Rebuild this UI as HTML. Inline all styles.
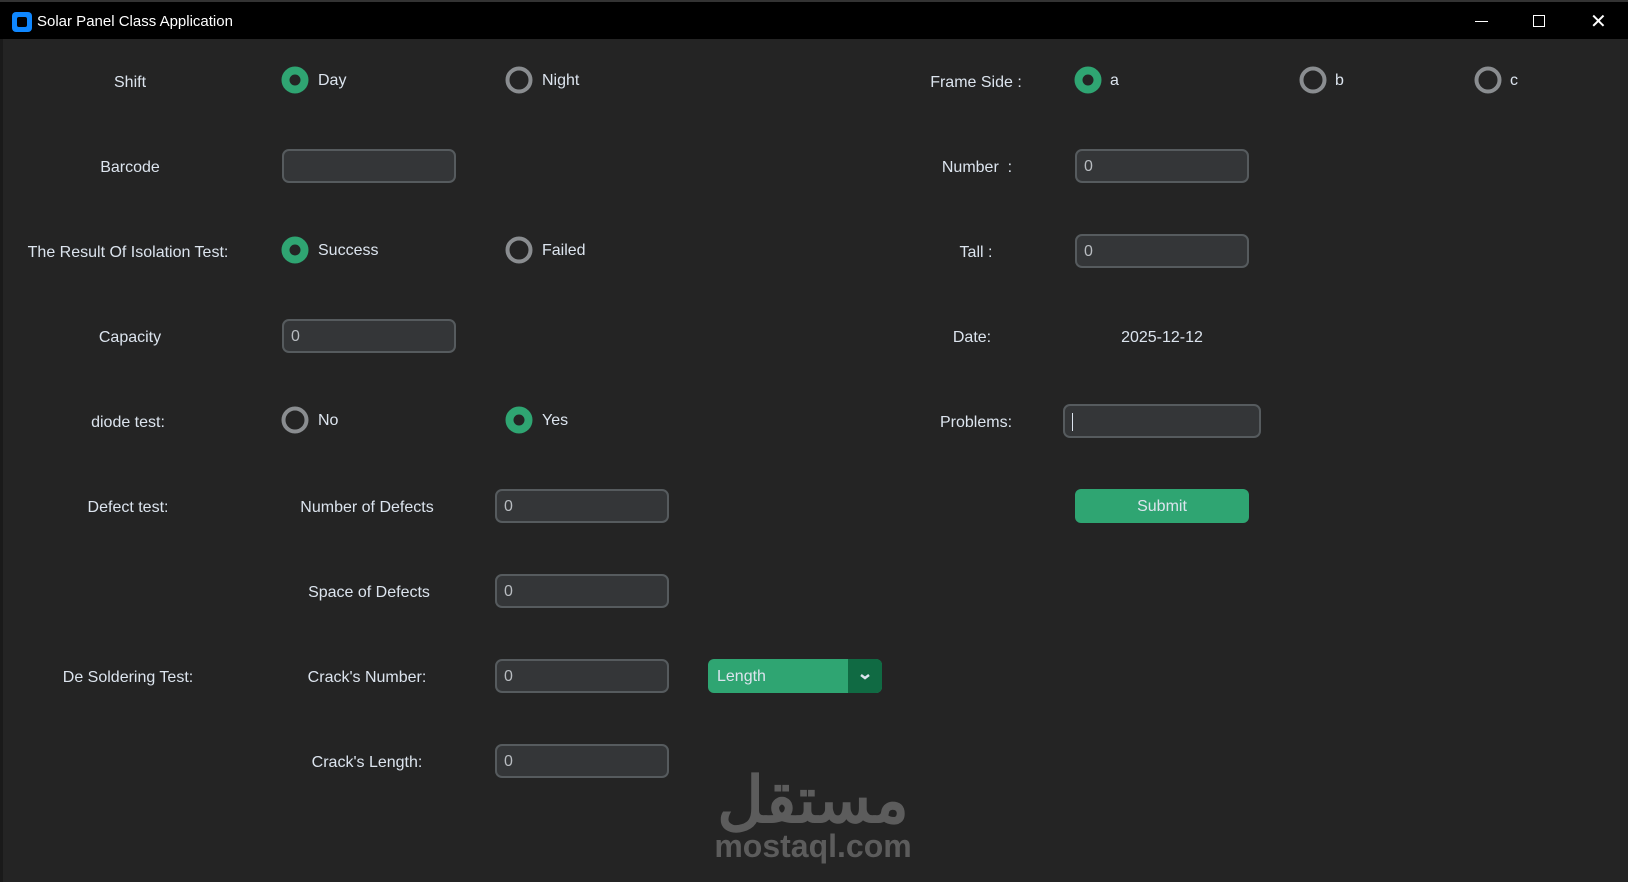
<!DOCTYPE html>
<html><head><meta charset="utf-8"><style>
*{margin:0;padding:0;box-sizing:border-box}
body{width:1628px;height:882px;background:#242424;font-family:"Liberation Sans",sans-serif;color:#dce4ee;font-size:16px;position:relative;overflow:hidden}
.tb{position:absolute;left:0;top:0;width:1628px;height:39px;background:#000;border-top:2px solid #333}
.tb .t{position:absolute;left:37px;top:11px;font-size:15px;color:#fff}
.ic{position:absolute;left:12px;top:10px;width:20px;height:20px;background:#0f87ff;border-radius:4px}
.ic:after{content:"";position:absolute;left:5px;top:5px;width:10px;height:10px;background:#000;border-radius:2px}
.l{position:absolute;transform:translate(-50%,-50%);white-space:nowrap;margin-top:2px}
.r{position:absolute;width:27px;height:27px;border-radius:50%;transform:translate(-50%,-50%)}
.on{border:8px solid #2fa572;background:#242424}
.off{border:4px solid #8a8d90}
.rl{position:absolute;transform:translateY(-50%);margin-top:1px}
.e{position:absolute;width:174px;height:34px;background:#343638;border:2px solid #565b5e;border-radius:7px;color:#b8bcc0;padding:7px 0 0 7px}
</style></head><body>
<div class="tb"><div class="ic"></div><div class="t">Solar Panel Class Application</div>
<div style="position:absolute;left:1475px;top:19px;width:13px;height:1px;background:#fff"></div>
<div style="position:absolute;left:1533px;top:13px;width:12px;height:12px;border:1px solid #fff"></div>
<div style="position:absolute;left:1590px;top:10px;color:#fff;font-size:20px;line-height:20px">✕</div>
</div>
<div style="position:absolute;left:0;top:39px;width:3px;height:843px;background:#1a1a1a"></div>

<div class="l" style="left:130px;top:81px">Shift</div>
<div class="r on" style="left:295px;top:80px"></div><div class="rl" style="left:318px;top:80px">Day</div>
<div class="r off" style="left:519px;top:80px"></div><div class="rl" style="left:542px;top:80px">Night</div>

<div class="l" style="left:130px;top:166px">Barcode</div>
<div class="e" style="left:282px;top:149px"></div>

<div class="l" style="left:128px;top:251px">The Result Of Isolation Test:</div>
<div class="r on" style="left:295px;top:250px"></div><div class="rl" style="left:318px;top:250px">Success</div>
<div class="r off" style="left:519px;top:250px"></div><div class="rl" style="left:542px;top:250px">Failed</div>

<div class="l" style="left:130px;top:336px">Capacity</div>
<div class="e" style="left:282px;top:319px">0</div>

<div class="l" style="left:128px;top:421px">diode test:</div>
<div class="r off" style="left:295px;top:420px"></div><div class="rl" style="left:318px;top:420px">No</div>
<div class="r on" style="left:519px;top:420px"></div><div class="rl" style="left:542px;top:420px">Yes</div>

<div class="l" style="left:128px;top:506px">Defect test:</div>
<div class="l" style="left:367px;top:506px">Number of Defects</div>
<div class="e" style="left:495px;top:489px">0</div>

<div class="l" style="left:369px;top:591px">Space of Defects</div>
<div class="e" style="left:495px;top:574px">0</div>

<div class="l" style="left:128px;top:676px">De Soldering Test:</div>
<div class="l" style="left:367px;top:676px">Crack's Number:</div>
<div class="e" style="left:495px;top:659px">0</div>
<div style="position:absolute;left:708px;top:659px;width:174px;height:34px;background:#2fa572;border-radius:6px;overflow:hidden">
<div style="position:absolute;left:9px;top:9px">Length</div>
<div style="position:absolute;right:0;top:0;width:34px;height:34px;background:#106a43"><svg width="34" height="34"><path d="M13 16l4 3 4-3" stroke="#dce4ee" stroke-width="2.5" fill="none"/></svg></div>
</div>

<div class="l" style="left:367px;top:761px">Crack's Length:</div>
<div class="e" style="left:495px;top:744px">0</div>

<div class="l" style="left:976px;top:81px">Frame Side :</div>
<div class="r on" style="left:1088px;top:80px"></div><div class="rl" style="left:1110px;top:80px">a</div>
<div class="r off" style="left:1313px;top:80px"></div><div class="rl" style="left:1335px;top:80px">b</div>
<div class="r off" style="left:1488px;top:80px"></div><div class="rl" style="left:1510px;top:80px">c</div>

<div class="l" style="left:977px;top:166px">Number &nbsp;:</div>
<div class="e" style="left:1075px;top:149px">0</div>
<div class="l" style="left:976px;top:251px">Tall :</div>
<div class="e" style="left:1075px;top:234px">0</div>
<div class="l" style="left:972px;top:336px">Date:</div>
<div class="l" style="left:1162px;top:336px">2025-12-12</div>
<div class="l" style="left:976px;top:421px">Problems:</div>
<div class="e" style="left:1063px;top:404px;width:198px"><span style="display:inline-block;width:1px;height:18px;background:#dce4ee"></span></div>
<div style="position:absolute;left:1075px;top:489px;width:174px;height:34px;background:#2fa572;border-radius:6px;text-align:center;line-height:36px">Submit</div>

<div style="position:absolute;left:700px;top:760px;width:226px;text-align:center;color:#5c5c5c;font-family:'Noto Sans CJK SC',sans-serif;font-size:64px;font-weight:bold;line-height:70px" dir="rtl">مستقل</div>
<div style="position:absolute;left:700px;top:828px;width:226px;text-align:center;color:#5c5c5c;font-size:32px;font-weight:bold;line-height:36px">mostaql.com</div>
</body></html>
